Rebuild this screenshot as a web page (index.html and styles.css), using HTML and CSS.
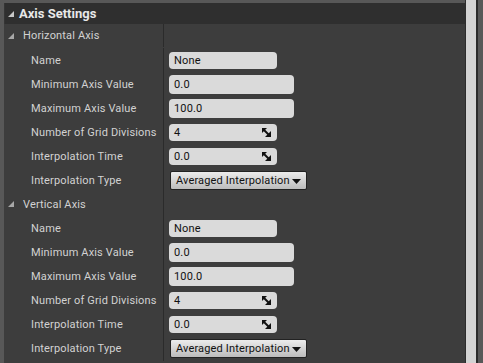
FILE: index.html
```html
<!DOCTYPE html>
<html>
<head>
<meta charset="utf-8">
<link rel="stylesheet" href="styles.css">
</head>
<body>
<div class="frame">
  <div class="main">
    <div class="header">
      <svg class="tri" width="6" height="6" viewBox="0 0 6 6"><polygon points="0,6 6,6 6,0" fill="#c8c8c8"/></svg>
      <span class="htitle">Axis Settings</span>
    </div>
    <div class="grid">
      <div class="cat r23"><svg class="tri" width="6" height="6" viewBox="0 0 6 6"><polygon points="0,6 6,6 6,0" fill="#a8a8a8"/></svg><span>Horizontal Axis</span></div><div class="val r23"></div>
      <div class="lab">Name</div><div class="val"><div class="box w108 h17">None</div></div>
      <div class="lab">Minimum Axis Value</div><div class="val"><div class="box w125 h19">0.0</div></div>
      <div class="lab">Maximum Axis Value</div><div class="val"><div class="box w125 h19">100.0</div></div>
      <div class="lab">Number of Grid Divisions</div><div class="val"><div class="box w108 h17 spin">4<svg class="arr" width="9" height="9" viewBox="0 0 9 9"><polygon points="0,0 5,0 0,5" fill="#111"/><polygon points="9,3 9,9 3,9" fill="#111"/><line x1="1" y1="1" x2="8" y2="8" stroke="#111" stroke-width="2"/></svg></div></div>
      <div class="lab r25">Interpolation Time</div><div class="val r25"><div class="box w108 h17 spin">0.0<svg class="arr" width="9" height="9" viewBox="0 0 9 9"><polygon points="0,0 5,0 0,5" fill="#111"/><polygon points="9,3 9,9 3,9" fill="#111"/><line x1="1" y1="1" x2="8" y2="8" stroke="#111" stroke-width="2"/></svg></div></div>
      <div class="lab r25">Interpolation Type</div><div class="val r25"><div class="drop">Averaged Interpolation<svg class="down" width="9" height="5" viewBox="0 0 9 5"><polygon points="0,0 9,0 4.5,5" fill="#111"/></svg></div></div>

      <div class="cat r24"><svg class="tri" width="6" height="6" viewBox="0 0 6 6"><polygon points="0,6 6,6 6,0" fill="#a8a8a8"/></svg><span>Vertical Axis</span></div><div class="val r24"></div>
      <div class="lab">Name</div><div class="val"><div class="box w108 h17">None</div></div>
      <div class="lab">Minimum Axis Value</div><div class="val"><div class="box w125 h19">0.0</div></div>
      <div class="lab">Maximum Axis Value</div><div class="val"><div class="box w125 h19">100.0</div></div>
      <div class="lab">Number of Grid Divisions</div><div class="val"><div class="box w108 h17 spin">4<svg class="arr" width="9" height="9" viewBox="0 0 9 9"><polygon points="0,0 5,0 0,5" fill="#111"/><polygon points="9,3 9,9 3,9" fill="#111"/><line x1="1" y1="1" x2="8" y2="8" stroke="#111" stroke-width="2"/></svg></div></div>
      <div class="lab r25">Interpolation Time</div><div class="val r25"><div class="box w108 h17 spin">0.0<svg class="arr" width="9" height="9" viewBox="0 0 9 9"><polygon points="0,0 5,0 0,5" fill="#111"/><polygon points="9,3 9,9 3,9" fill="#111"/><line x1="1" y1="1" x2="8" y2="8" stroke="#111" stroke-width="2"/></svg></div></div>
      <div class="lab r25">Interpolation Type</div><div class="val r25"><div class="drop">Averaged Interpolation<svg class="down" width="9" height="5" viewBox="0 0 9 5"><polygon points="0,0 9,0 4.5,5" fill="#111"/></svg></div></div>
    </div>
  </div>
  <div class="sep1"></div>
  <div class="thumb"></div>
  <div class="sep2"></div>
</div>
</body>
</html>
```

FILE: styles.css
```css
html, body {
  margin: 0;
  padding: 0;
  background: #585858;
  overflow: hidden;
}
.frame {
  display: flex;
  width: 483px;
  height: 363px;
  background: #585858;
  font-family: Roboto, "Liberation Sans", sans-serif;
}
.main {
  width: 461px;
  margin-left: 4px;
  margin-top: 3px;
  background: #3d3d3d;
  display: flex;
  flex-direction: column;
}
.header {
  height: 21px;
  background: #2f2f2f;
  display: flex;
  align-items: center;
  padding-left: 3px;
  border-left: 1px solid #353535;
}
.header .tri {
  margin-right: 5px;
  margin-top: 1px;
}
.htitle {
  color: #e8e8e8;
  font-weight: bold;
  font-size: 13px;
}
.grid {
  display: grid;
  grid-template-columns: 159px 1fr;
  grid-auto-rows: 24px;
}
.grid .r23 { height: 23px; }
.grid .r24 { height: 24px; }
.grid .r25 { height: 25px; }
.lab, .cat, .val {
  height: 24px;
  display: flex;
  align-items: center;
}
.lab {
  padding-left: 27px;
  color: #d2d2d2;
  font-size: 11px;
  letter-spacing: 0.15px;
}
.cat {
  padding-left: 4px;
  color: #d2d2d2;
  font-size: 11px;
  letter-spacing: 0.15px;
}
.cat .tri {
  margin-right: 9px;
}
.val {
  border-left: 1px solid #2b2b2b;
  padding-left: 5px;
}
.box {
  box-sizing: border-box;
  background: #dadada;
  border-radius: 4px;
  color: #111;
  font-size: 11px;
  letter-spacing: 0.15px;
  padding-left: 5px;
  display: flex;
  align-items: center;
}
.w108 { width: 108px; }
.w125 { width: 125px; }
.h17 { height: 17px; }
.h19 { height: 19px; }
.spin {
  justify-content: space-between;
  padding-right: 6px;
}
.arr { display: block; }
.drop {
  box-sizing: border-box;
  height: 19px;
  padding: 0 5px 0 5px;
  display: flex;
  align-items: center;
  gap: 2px;
  font-size: 11px;
  letter-spacing: 0.15px;
  color: #111;
  background: linear-gradient(#ececec, #bcbcbc);
  border: 1px solid #222;
  border-radius: 2px;
  margin-left: 1px;
}
.down { display: block; margin-top: 1px; }
.sep1 {
  width: 1px;
  background: #2c2c2c;
}
.thumb {
  width: 10px;
  background: #d3d3d3;
}
.sep2 {
  width: 2px;
  background: #2a2a2a;
}
```
